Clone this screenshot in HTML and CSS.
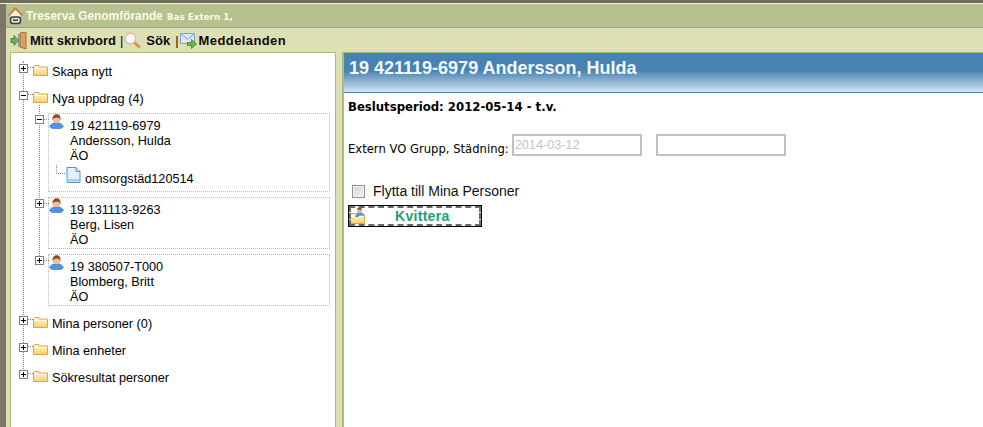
FILE: index.html
```html
<!DOCTYPE html>
<html lang="sv">
<head>
<meta charset="utf-8">
<title>Treserva Genomförande</title>
<link rel="stylesheet" href="styles.css">
</head>
<body>
<svg class="defs" width="0" height="0" aria-hidden="true">
  <defs>
    <linearGradient id="fg" x1="0" y1="0" x2="0" y2="1"><stop offset="0" stop-color="#fff8d2"/><stop offset="1" stop-color="#f8d168"/></linearGradient>
    <symbol id="folder" viewBox="0 0 15 11">
      <path d="M.5 10.500V1.500l1-1h4l1 1.500h8v8.500z" fill="url(#fg)" stroke="#e0a24e"/>
      <path d="M1.500 3.500h12" stroke="#fffbe4"/>
    </symbol>
    <symbol id="person" viewBox="0 0 15 15">
      <path d="M.5 12.500c1.200-2.500 3-3 4.500-3.500h5c1.500.5 3.300 1 4.500 3.500l-2.500 2h-9z" fill="#4d93ea" stroke="#2f6fc0" stroke-width=".6"/>
      <circle cx="7.500" cy="5.500" r="3.800" fill="#f0bd96"/>
      <path d="M3.500 6C3.200 1.500 6 .3 7.800.3c2.400 0 4 1.700 3.700 5.700-.8-1.700-1.800-2.500-3.700-2.500-1.600 0-3.400.7-4.300 2.500z" fill="#8a4b25"/>
    </symbol>
    <symbol id="plus" viewBox="0 0 9 9">
      <rect x=".5" y=".5" width="8" height="8" fill="#fff" stroke="#808080"/>
      <path d="M2 4.500h5M4.500 2v5" stroke="#000"/>
    </symbol>
    <symbol id="minus" viewBox="0 0 9 9">
      <rect x=".5" y=".5" width="8" height="8" fill="#fff" stroke="#808080"/>
      <path d="M2 4.500h5" stroke="#000"/>
    </symbol>
  </defs>
</svg>
<div class="strip"></div>
<div class="shell">
<header class="titlebar">
  <svg class="home" width="17" height="18" viewBox="0 0 17 18"><path d="M1.500 8.500 8.500 1.500l7 7" fill="none" stroke="#cf8140" stroke-width="2.200"/><path d="M3.500 8l5-5 5 5v4h-10z" fill="#f6f2e4"/><rect x="3.500" y="10" width="10" height="6.500" rx="2.500" fill="#e2e2e2" stroke="#3e3e3e" stroke-width="1.500"/><path d="M6 13.200h5" stroke="#3e3e3e" stroke-width="1.500"/></svg>
  <span class="app">Treserva Genomförande</span>
  <span class="sub">Bas Extern 1,</span>
</header>
<nav class="toolbar">
  <svg class="tool-ic" width="17" height="17" viewBox="0 0 17 17"><path d="M10 1l6-1v17l-6-2z" fill="#dc9d60" stroke="#a86c36"/><path d="M8 2h2v13H8z" fill="#8d9aa0"/><path d="M1 6.500h3V3.500l4.500 5L4 13.500v-3H1z" fill="#62bb4c" stroke="#2f7a2c" stroke-width=".8"/></svg>
  <span class="tool">Mitt skrivbord</span>
  <span class="sep">|</span>
  <svg class="tool-ic" width="17" height="17" viewBox="0 0 17 17"><circle cx="6.500" cy="6.500" r="5.300" fill="#f5f8fb" stroke="#dcc09c" stroke-width="1.400"/><path d="M10.500 10.500l5.200 5" stroke="#d98f4e" stroke-width="2.600"/></svg>
  <span class="tool search">Sök</span>
  <span class="sep sep2">|</span>
  <svg class="tool-ic msg-ic" width="17" height="17" viewBox="0 0 17 17"><path d="M.5 1.500h14v10H.500z" fill="#dbe7f8" stroke="#7f9fd0"/><path d="M.5 1.500l7 6 7-6" fill="none" stroke="#7f9fd0"/><path d="M7.500 10.500h4v-3l5 4.500-5 4.500v-3h-4z" fill="#62bb4c" stroke="#2f7a2c" stroke-width=".7"/></svg>
  <span class="tool msg">Meddelanden</span>
</nav>
<main class="main">
  <section class="tree">
    <div class="node">
      <svg class="box"><use href="#plus"/></svg><span class="tick"></span>
      <svg class="folder"><use href="#folder"/></svg><span class="label">Skapa nytt</span>
    </div>
    <div class="node">
      <svg class="box"><use href="#minus"/></svg><span class="tick"></span>
      <svg class="folder"><use href="#folder"/></svg><span class="label">Nya uppdrag (4)</span>
    </div>
    <div class="people">
      <div class="person open">
        <svg class="box pbox"><use href="#minus"/></svg>
        <span class="ptick"></span>
        <svg class="pic"><use href="#person"/></svg>
        <div class="lines">19 421119-6979<br>Andersson, Hulda<br>ÄO</div>
        <div class="doc">
          <span class="elbow"></span>
          <svg class="docic" width="15" height="16" viewBox="0 0 15 16"><path d="M1 .5h9l4 4v11H1z" fill="#e6f0fb" stroke="#5d94cf"/><path d="M10 .5v4h4" fill="#bcd6f2" stroke="#5d94cf"/><path d="M2 12h11v2.500H2z" fill="#a9cbed"/></svg>
          <span class="docname">omsorgstäd120514</span>
        </div>
      </div>
      <div class="person">
        <svg class="box pbox"><use href="#plus"/></svg>
        <span class="ptick"></span>
        <svg class="pic"><use href="#person"/></svg>
        <div class="lines">19 131113-9263<br>Berg, Lisen<br>ÄO</div>
      </div>
      <div class="person">
        <svg class="box pbox"><use href="#plus"/></svg>
        <span class="ptick"></span>
        <svg class="pic"><use href="#person"/></svg>
        <div class="lines">19 380507-T000<br>Blomberg, Britt<br>ÄO</div>
      </div>
    </div>
    <div class="node">
      <svg class="box"><use href="#plus"/></svg><span class="tick"></span>
      <svg class="folder"><use href="#folder"/></svg><span class="label">Mina personer (0)</span>
    </div>
    <div class="node">
      <svg class="box"><use href="#plus"/></svg><span class="tick"></span>
      <svg class="folder"><use href="#folder"/></svg><span class="label">Mina enheter</span>
    </div>
    <div class="node">
      <svg class="box"><use href="#plus"/></svg><span class="tick"></span>
      <svg class="folder"><use href="#folder"/></svg><span class="label">Sökresultat personer</span>
    </div>
  </section>
  <section class="detail">
    <h1 class="head">19 421119-6979 Andersson, Hulda</h1>
    <p class="period">Beslutsperiod: 2012-05-14 - t.v.</p>
    <div class="dates">
      <label class="dlabel">Extern VO Grupp, Städning:</label>
      <input class="date" type="text" value="2014-03-12" disabled>
      <input class="date second" type="text" disabled>
    </div>
    <label class="move"><input class="check" type="checkbox"><span>Flytta till Mina Personer</span></label>
    <button class="ack" type="button">
      <svg class="ackic" width="16" height="18" viewBox="0 0 16 18"><use href="#folder" width="15" height="11" y="6"/><circle cx="9.500" cy="3" r="2.500" fill="#e5ae85"/><path d="M7 2.500C7 0 12 0 12 2.500z" fill="#8a4b25"/><path d="M7 5.500h5l3 3h-5l-2 1.500H5z" fill="#4d93ea"/></svg>
      <span class="acktext">Kvittera</span>
    </button>
  </section>
</main>
</div>
</body>
</html>
```
FILE: styles.css
```css
* { box-sizing: border-box; }
html, body { margin: 0; height: 100%; overflow: hidden; }
body {
  width: 983px;
  height: 427px;
  background: #dfdfb5;
  font-family: "Liberation Sans", Arial, sans-serif;
  font-size: 12.7px;
  color: #000;
  display: flex;
  flex-direction: column;
}
.defs { position: absolute; }
.strip {
  height: 4px;
  flex: none;
  background: #6f6a5a;
  border-bottom: 1px solid #f3f3e4;
}
.shell {
  flex: 1;
  min-height: 0;
  display: flex;
  flex-direction: column;
  border-left: 6px solid #7b7767;
}
.titlebar {
  height: 24px;
  flex: none;
  background: #b7c08f;
  border-bottom: 1px solid #9fa386;
  display: flex;
  align-items: center;
  padding: 0 0 0 1px;
  color: #fbfbe6;
}
.home { margin-right: 2px; flex: none; }
.app { font-weight: bold; font-size: 11.9px; }
.sub { font-weight: bold; font-size: 8.8px; margin-left: 4px; padding-top: 2px; font-family: "DejaVu Sans", sans-serif; }
.toolbar {
  height: 24px;
  flex: none;
  display: flex;
  align-items: center;
  padding-left: 4px;
  font-weight: bold;
  font-size: 13px;
  color: #0c0c0c;
}
.tool-ic { margin-right: 3px; flex: none; }
.search { margin-left: 2px; }
.sep { font-weight: normal; margin: 0 1px 0 4px; }
.sep2 { margin: 0 1px 0 5px; }
.msg-ic { margin-right: 2px; }
.msg { letter-spacing: .4px; }
.main {
  flex: 1;
  display: flex;
  min-height: 0;
  padding-left: 4px;
}
.tree {
  width: 326px;
  flex: none;
  background: #fff;
  border: 1px solid #a9bb78;
  border-bottom: 0;
  position: relative;
  padding: 9px 5px 0 8px;
}
.tree::before {
  content: "";
  position: absolute;
  left: 12px;
  top: 8px;
  height: 312px;
  border-left: 1px dotted #888;
}
.node {
  height: 27px;
  display: flex;
  align-items: flex-start;
  position: relative;
  line-height: 15px;
  padding-top: 2px;
}
.label { margin-top: 1px; }
.box { width: 9px; height: 9px; flex: none; position: relative; z-index: 1; background: #fff; }
.tick { width: 5px; height: 0; flex: none; border-top: 1px dotted #888; margin-top: 3px; }
.folder { width: 15px; height: 11px; flex: none; margin: 1px 4px 0 0; }
.people {
  margin: -3px 0 8px 29px;
  display: flex;
  flex-direction: column;
  gap: 5px;
  position: relative;
}
.people::before {
  content: "";
  position: absolute;
  left: -9px;
  top: -8px;
  bottom: 46px;
  border-left: 1px dotted #888;
}
.person {
  border: 1px dotted #bbb;
  position: relative;
  padding: 5px 0 0 21px;
  line-height: 15px;
  min-height: 52px;
}
.open { padding-bottom: 5px; }
.pbox { position: absolute; left: -14px; top: 1px; }
.ptick { position: absolute; left: -5px; top: 5px; width: 5px; border-top: 1px dotted #888; }
.pic { position: absolute; left: 0; top: 0; width: 15px; height: 15px; }
.doc {
  display: flex;
  align-items: center;
  position: relative;
  margin: 0 0 0 -4px;
  height: 22px;
  gap: 4px;
}
.docname { margin-top: 8px; }
.elbow {
  position: absolute;
  left: -10px;
  top: 1px;
  width: 9px;
  height: 9px;
  border-left: 1px dotted #888;
  border-bottom: 1px dotted #888;
}
.docic { flex: none; }
.detail {
  width: 642px;
  margin-left: 6px;
  flex: none;
  background: #fff;
  border-left: 2px solid #a9bb78;
  border-top: 1px solid #a9bb78;
}
.head {
  margin: 0;
  height: 40px;
  padding: 5px 0 0 5px;
  font-size: 18px;
  line-height: 20px;
  font-weight: bold;
  color: #f5f9fc;
  background: linear-gradient(180deg, #4682b4 0, #4682b4 45%, #d7e4f0 100%);
  border-bottom: 1px solid #4682b4;
}
.period {
  margin: 7px 0 0 4px;
  font-family: "DejaVu Sans", Verdana, sans-serif;
  font-weight: bold;
  font-size: 11.7px;
  line-height: 14px;
}
.dates {
  display: flex;
  align-items: center;
  margin: 20px 0 0 4px;
  height: 22px;
}
.dlabel {
  font-family: "DejaVu Sans", Verdana, sans-serif;
  font-size: 11.6px;
  padding-top: 8px;
  margin-right: 3px;
}
.date {
  width: 130px;
  height: 22px;
  border: 2px solid #c0c0c0;
  background: #fff;
  padding: 0 1px;
  font-family: "Liberation Sans", Arial, sans-serif;
  font-size: 12.7px;
  color: #c4c4c4;
}
.second { margin-left: 14px; }
.move {
  display: flex;
  align-items: center;
  margin: 25px 0 0 6px;
  font-size: 14px;
  height: 20px;
  color: #111;
}
.check {
  appearance: none;
  margin: 0 8px 0 2px;
  width: 13px;
  height: 13px;
  border: 1px solid #8f8f8f;
  background: linear-gradient(135deg, #d4d4d4, #f2f2f2);
  box-shadow: inset 0 0 0 1px #f4f4f4;
}
.ack {
  display: flex;
  align-items: center;
  margin: 4px 0 0 4px;
  padding: 0;
  width: 134px;
  height: 22px;
  background: #fff;
  border: 1px solid #000;
  outline: 2px dashed #6a6a6a;
  outline-offset: -3px;
  font-family: "Liberation Sans", Arial, sans-serif;
  font-size: 14px;
  letter-spacing: .3px;
  font-weight: bold;
  color: #1d9f77;
}
.ackic { flex: none; margin-left: 1px; }
.acktext { margin-left: 29px; }
```
